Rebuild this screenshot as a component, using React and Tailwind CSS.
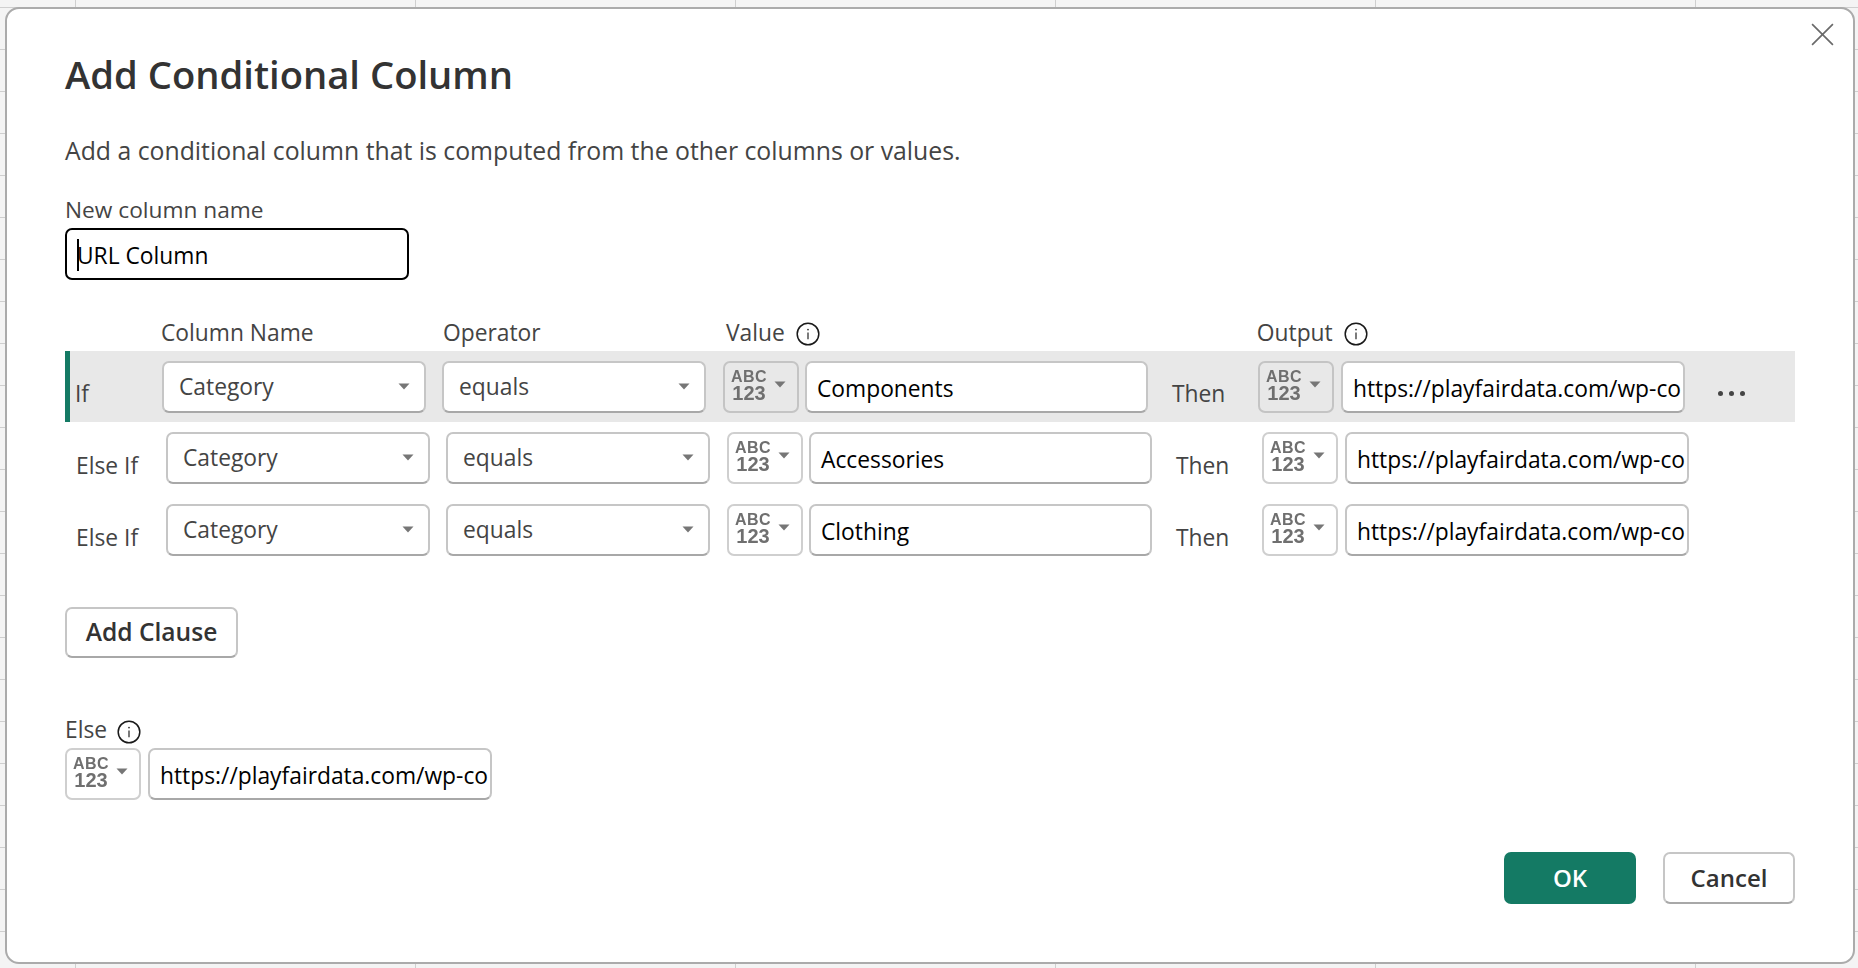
const font = "font-['Open_Sans','Noto_Sans',sans-serif]";

function Info({ className = "" }) {
  return (
    <svg viewBox="0 0 24 24" className={`w-[24px] h-[24px] ${className}`} fill="none">
      <circle cx="12" cy="12" r="10.8" stroke="#1a1a1a" strokeWidth="1.5" />
      <path d="M12 10.6v6.6" stroke="#333" strokeWidth="1.3" />
      <circle cx="12" cy="7.6" r="0.9" fill="#333" />
    </svg>
  );
}

function Caret() {
  return (
    <svg viewBox="0 0 12 7" className="w-[12px] h-[7px] shrink-0">
      <path d="M0.5 0.5h11L6 6.5z" fill="#767676" />
    </svg>
  );
}

function Select({ label }) {
  return (
    <div className="w-[264px] h-[52px] shrink-0 bg-white border-2 border-[#c6c6c6] border-b-[#a8a8a8] rounded-[7px] flex items-center justify-between pl-[15px] pr-[14px]">
      <span className="text-[22.8px] text-[#444] leading-none mt-[2px]">{label}</span>
      <Caret />
    </div>
  );
}

function TypeBtn({ active }) {
  return (
    <div className={`w-[76px] h-[52px] shrink-0 border-2 rounded-[7px] flex items-center pl-[6px] gap-[7px] ${active ? "bg-[#e8e8e8] border-[#c4c4c4]" : "bg-white border-[#cfcfcf]"}`}>
      <div className="flex flex-col items-center w-[36px] -mt-[2px] font-['Liberation_Sans',sans-serif] font-bold text-[#6f6f6f] blur-[0.4px]">
        <span className="text-[16px] leading-[16px] tracking-[0.4px]">ABC</span>
        <span className="text-[20px] leading-[17px]">123</span>
      </div>
      <div className="-mt-[4px]"><Caret /></div>
    </div>
  );
}

function TextField({ value, w }) {
  return (
    <div className={`${w} h-[52px] shrink-0 bg-white border-2 border-[#c6c6c6] border-b-[#a8a8a8] rounded-[7px] flex items-center pl-[10px] overflow-hidden`}>
      <span className="text-[22.8px] text-black whitespace-nowrap leading-none mt-[6px]">{value}</span>
    </div>
  );
}

const URL = "https://playfairdata.com/wp-co";

function Row({ label, selected, value }) {
  return (
    <div className={`flex items-start ${selected ? "h-[71px] bg-[#e8e8e8] border-l-[5px] border-[#147a64] pl-[5px] pt-[10px]" : "h-[72px] pl-[11px] pt-[10px]"}`}>
      <span className={`text-[22.8px] text-[#444] leading-none shrink-0 ${selected ? "w-[87px] mt-[22px]" : "w-[90px] mt-[23px]"}`}>{label}</span>
      <Select label="Category" />
      <div className="w-[16px] shrink-0" />
      <Select label="equals" />
      <div className="w-[17px] shrink-0" />
      <TypeBtn active={selected} />
      <div className="w-[6px] shrink-0" />
      <TextField value={value} w="w-[343px]" />
      <span className={`text-[22.8px] text-[#444] leading-none ml-[24px] w-[86px] shrink-0 ${selected ? "mt-[22px]" : "mt-[23px]"}`}>Then</span>
      <TypeBtn active={selected} />
      <div className="w-[7px] shrink-0" />
      <TextField value={URL} w="w-[344px]" />
      {selected && (
        <div className="flex gap-[6px] ml-[33px] mt-[30px]">
          <span className="w-[5px] h-[5px] rounded-full bg-[#444]" />
          <span className="w-[5px] h-[5px] rounded-full bg-[#444]" />
          <span className="w-[5px] h-[5px] rounded-full bg-[#444]" />
        </div>
      )}
    </div>
  );
}

export default function App() {
  return (
    <div className={`${font} w-[1858px] h-[968px] overflow-hidden pl-[5px] pt-[7px] bg-[#f4f4f4] bg-[linear-gradient(90deg,transparent_75px,#cfcfcf_75px,#cfcfcf_76px,transparent_76px,transparent_415px,#cfcfcf_415px,#cfcfcf_416px,transparent_416px,transparent_735px,#cfcfcf_735px,#cfcfcf_736px,transparent_736px,transparent_1055px,#cfcfcf_1055px,#cfcfcf_1056px,transparent_1056px,transparent_1375px,#cfcfcf_1375px,#cfcfcf_1376px,transparent_1376px,transparent_1695px,#cfcfcf_1695px,#cfcfcf_1696px,transparent_1696px),repeating-linear-gradient(180deg,transparent_0,transparent_7px,#cfcfcf_7px,#cfcfcf_8px,transparent_8px,transparent_42px)]`}>
      <div className="relative w-[1850px] h-[957px] bg-white border-2 border-[#ababab] rounded-[14px] pl-[58px] flex flex-col">
        <button className="absolute right-[18px] top-[13px] w-[25px] h-[25px]">
          <svg viewBox="0 0 24 24" className="w-[25px] h-[25px]" fill="none" stroke="#6a6a6a" strokeWidth="1.6">
            <path d="M2 2l20 20M22 2L2 22" />
          </svg>
        </button>

        <h1 className="text-[38.2px] font-semibold text-[#333] leading-none mt-[46px]">Add Conditional Column</h1>
        <p className="text-[24.8px] text-[#444] leading-none mt-[45px]">Add a conditional column that is computed from the other columns or values.</p>
        <label className="text-[22.7px] text-[#444] leading-none mt-[36px]">New column name</label>
        <div className="relative w-[344px] h-[52px] mt-[6px] border-2 border-black rounded-[7px] flex items-center pl-[10px] bg-white">
          <span className="text-[22.8px] text-black leading-none mt-[6px]">URL Column</span>
          <span className="absolute left-[10px] top-[9px] w-[2px] h-[32px] bg-black" />
        </div>

        <div className="flex items-center h-[30px] mt-[38px] pt-[1px] text-[22.8px] text-[#444] leading-none">
          <span className="ml-[96px] w-[282px] shrink-0">Column Name</span>
          <span className="w-[283px] shrink-0">Operator</span>
          <span className="shrink-0">Value</span>
          <Info className="ml-[11px] mt-[2px] shrink-0" />
          <span className="ml-[437px] shrink-0">Output</span>
          <Info className="ml-[11px] mt-[2px] shrink-0" />
        </div>

        <div className="flex flex-col w-[1730px] mt-[3px]">
          <Row label="If" selected value="Components" />
          <Row label="Else If" value="Accessories" />
          <Row label="Else If" value="Clothing" />
        </div>

        <button className="self-start w-[173px] h-[51px] mt-[41px] bg-white border-2 border-[#c6c6c6] border-b-[#a8a8a8] rounded-[7px] text-[24.6px] font-semibold text-[#333] leading-none">Add Clause</button>

        <div className="flex items-center h-[24px] mt-[61px] gap-[10px] text-[22.8px] text-[#444] leading-none">
          <span>Else</span>
          <Info className="mt-[2px]" />
        </div>
        <div className="flex gap-[7px] mt-[5px]">
          <TypeBtn />
          <TextField value={URL} w="w-[344px]" />
        </div>

        <div className="flex justify-end gap-[27px] w-[1730px] mt-[52px]">
          <button className="w-[132px] h-[52px] bg-[#147a64] rounded-[7px] text-[24px] font-semibold text-white leading-none">OK</button>
          <button className="w-[132px] h-[52px] bg-white border-2 border-[#c6c6c6] border-b-[#a8a8a8] rounded-[7px] text-[24px] font-semibold text-[#333] leading-none">Cancel</button>
        </div>
      </div>
    </div>
  );
}
